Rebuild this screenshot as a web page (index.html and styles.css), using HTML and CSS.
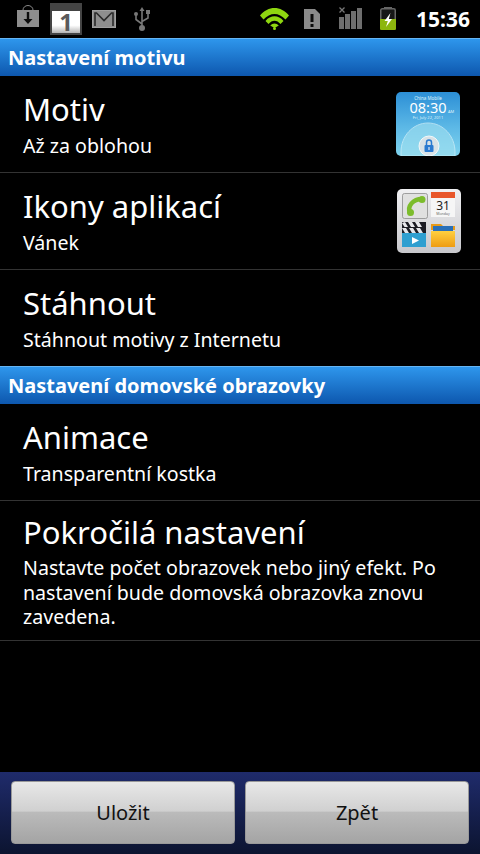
FILE: index.html
```html
<!DOCTYPE html>
<html lang="cs">
<head>
    <meta charset="UTF-8">
    <meta name="viewport" content="width=device-width, initial-scale=1.0">
    <title>Nastavení motivu</title>
    <link rel="stylesheet" href="styles.css">
</head>
<body>
    <div class="statusbar">
        <div class="status-left">
            <svg class="ic-market" width="22" height="22" viewBox="0 0 22 22">
                <path d="M6 6V5a5 4.500 0 0 1 10 0v1" fill="none" stroke="#8a8a8a" stroke-width="1"/>
                <rect x="0" y="5" width="22" height="17" fill="#8e8e8e"/>
                <path d="M9.800 7h2.400v7h3.300L11 19l-4.500-5h3.300z" fill="#0c0c0c"/>
            </svg>
            <div class="ic-cal"><span>1</span></div>
            <svg class="ic-mail" width="24" height="18" viewBox="0 0 24 18">
                <rect x="0.500" y="0.500" width="23" height="17" fill="#8e8e8e" stroke="#a0a0a0"/>
                <path d="M3 16V3h1.500L12 10.500 19.500 3H21v13" fill="none" stroke="#2a2a2a" stroke-width="1.600"/>
            </svg>
            <svg class="ic-usb" width="16" height="24" viewBox="0 0 16 24">
                <path d="M8 21V3M8 17L2 12.500V8M8 14.500l6-3.500V6" fill="none" stroke="#777" stroke-width="1.600"/>
                <path d="M8 0l2.500 4h-5z" fill="#777"/>
                <circle cx="8" cy="21" r="3" fill="#777"/>
                <circle cx="2" cy="7" r="2" fill="#777"/>
                <rect x="12" y="3" width="4" height="4" fill="#777"/>
            </svg>
        </div>
        <div class="status-right">
            <svg class="ic-wifi" width="29" height="22" viewBox="0 0 29 22">
                <path d="M0 7.500C8-2.500 21-2.500 29 7.500L25.500 11.500C19 4 10 4 3.500 11.500z" fill="#8ed610"/>
                <path d="M5.500 13C10.500 6.800 18.500 6.800 23.500 13L20.500 16C17 11.500 12 11.500 8.500 16z" fill="#8ed610"/>
                <path d="M10.200 17.500c2.500-2.800 6.100-2.800 8.600 0L14.500 20z" fill="#8ed610"/>
                <circle cx="14.500" cy="20.500" r="1.500" fill="#8ed610"/>
            </svg>
            <svg class="ic-sim" width="16" height="20" viewBox="0 0 16 20">
                <path d="M0 0h11l5 5v15H0z" fill="#8a8a8a"/>
                <path d="M6.500 5h3v8h-3zM6.500 15h3v3h-3z" fill="#0c0c0c"/>
            </svg>
            <svg class="ic-signal" width="23" height="22" viewBox="0 0 23 22">
                <path d="M0.500 0.500l5 5M5.500 0.500l-5 5" stroke="#777" stroke-width="1.300"/>
                <path d="M0 10h5v12H0zM6 7h5v15H6zM12 4h5v18h-5zM18 1h5v21h-5z" fill="#6e6e6e"/>
            </svg>
            <svg class="ic-batt" width="16" height="23" viewBox="0 0 16 23">
                <path d="M4 0h8v2H4z" fill="#666"/>
                <rect x="0.750" y="1.750" width="14.500" height="20.500" rx="1.500" fill="#161616" stroke="#666" stroke-width="1.500"/>
                <path d="M0 12h16v9.500a1.500 1.500 0 0 1-1.500 1.500h-13A1.500 1.500 0 0 1 0 21.500z" fill="#8cb60e"/>
                <path d="M10.500 6L4.500 14h3.300L6 20l6-8H8.800z" fill="#fff"/>
            </svg>
            <span class="clock">15:36</span>
        </div>
    </div>

    <div class="section">Nastavení motivu</div>
    <div class="row">
        <div class="row-text">
            <div class="row-title">Motiv</div>
            <div class="row-sub">Až za oblohou</div>
        </div>
        <svg class="row-icon theme-icon" width="64" height="64" viewBox="0 0 64 64">
            <defs>
                <linearGradient id="sky" x1="0" y1="0" x2="0" y2="1">
                    <stop offset="0" stop-color="#2c8fd6"/>
                    <stop offset="0.550" stop-color="#5cb8e6"/>
                    <stop offset="1" stop-color="#7fd4ee"/>
                </linearGradient>
            </defs>
            <rect width="64" height="64" rx="5" fill="url(#sky)"/>
            <path d="M5 64V60C5 44 17 31 32 31s27 13 27 29v4z" fill="#9fdff0" opacity="0.650" stroke="#e0f6fb"/>
            <text x="32" y="8" class="ic-t1" text-anchor="middle">China Mobile</text>
            <text x="32" y="21" class="ic-t2" text-anchor="middle">08:30</text>
            <text x="52" y="21" class="ic-t3">AM</text>
            <text x="32" y="27" class="ic-t3" text-anchor="middle">Fri, July 22, 2011</text>
            <circle cx="33" cy="54" r="10" fill="#d9e2e6" stroke="#f2f8fa"/>
            <path d="M30.500 53v-2.500a2.500 2.500 0 0 1 5 0V53" fill="none" stroke="#2a7ad0" stroke-width="1.500"/>
            <rect x="28.500" y="53" width="9" height="7" rx="1" fill="#2a7ad0"/>
            <rect x="32.500" y="55" width="1" height="3" fill="#fff"/>
        </svg>
    </div>
    <div class="row">
        <div class="row-text">
            <div class="row-title">Ikony aplikací</div>
            <div class="row-sub">Vánek</div>
        </div>
        <svg class="row-icon" width="64" height="64" viewBox="0 0 64 64">
            <defs>
                <linearGradient id="tile" x1="0" y1="0" x2="0" y2="1">
                    <stop offset="0" stop-color="#f0f0f2"/>
                    <stop offset="1" stop-color="#c8c8cc"/>
                </linearGradient>
                <linearGradient id="folder" x1="0" y1="0" x2="0" y2="1">
                    <stop offset="0" stop-color="#ffd040"/>
                    <stop offset="1" stop-color="#ee9c12"/>
                </linearGradient>
            </defs>
            <rect width="64" height="64" rx="5" fill="url(#tile)"/>
            <rect x="5.500" y="4.500" width="25" height="25" rx="2" fill="#e0e0e0" stroke="#8c8c8c" stroke-width="0.800"/>
            <path d="M13 24C10 17 16 10 25 10" fill="none" stroke="#7cbc2c" stroke-width="4.500" stroke-linecap="round"/>
            <circle cx="13.500" cy="23.500" r="3.500" fill="#7cbc2c"/>
            <circle cx="25" cy="10.500" r="3.500" fill="#7cbc2c"/>
            <rect x="34" y="3" width="24" height="25" fill="#f6f6f6"/>
            <rect x="34" y="3" width="24" height="6" fill="#e8562a"/>
            <text x="46" y="21" class="ic-cal-n" text-anchor="middle">31</text>
            <text x="46" y="26" class="ic-cal-s" text-anchor="middle">Monday</text>
            <rect x="5" y="44" width="24" height="14" fill="#2f9fd0"/>
            <rect x="5" y="33" width="24" height="11" fill="#1c1c24"/>
            <path d="M8 33l3 5H7.500L5 34zM15 33l3 5h-4l-3-5zM22 33l3 5h-4l-3-5zM9 39l3 5H8l-3-5zM16 39l3 5h-4l-3-5zM23 39l3 5h-4l-3-5z" fill="#e8e8ec"/>
            <path d="M15 48l7 3.500-7 3.500z" fill="#fff"/>
            <path d="M34 35h10l2 2h12v4H34z" fill="#e89a18"/>
            <path d="M36 37h20v5H36z" fill="#2a70b8"/>
            <path d="M34 42h24v16H34z" fill="url(#folder)"/>
        </svg>
    </div>
    <div class="row last">
        <div class="row-text">
            <div class="row-title">Stáhnout</div>
            <div class="row-sub">Stáhnout motivy z Internetu</div>
        </div>
    </div>

    <div class="section">Nastavení domovské obrazovky</div>
    <div class="row">
        <div class="row-text">
            <div class="row-title">Animace</div>
            <div class="row-sub">Transparentní kostka</div>
        </div>
    </div>
    <div class="row tall">
        <div class="row-text">
            <div class="row-title">Pokročilá nastavení</div>
            <div class="row-sub">Nastavte počet obrazovek nebo jiný efekt. Po nastavení bude domovská obrazovka znovu zavedena.</div>
        </div>
    </div>

    <div class="footer">
        <button class="btn">Uložit</button>
        <button class="btn">Zpět</button>
    </div>
</body>
</html>
```

FILE: styles.css
```css
html, body {
    margin: 0;
    height: 100%;
}
body {
    width: 480px;
    height: 854px;
    display: flex;
    flex-direction: column;
    background-color: #000;
    color: #fff;
    font-family: "Noto Sans", "Open Sans", sans-serif;
    overflow: hidden;
}
.statusbar {
    height: 38px;
    flex: none;
    display: flex;
    justify-content: space-between;
    align-items: flex-start;
}
.status-left, .status-right {
    display: flex;
    align-items: flex-start;
}
.status-left {
    padding-left: 17px;
}
.ic-market {
    margin-top: 5px;
}
.ic-cal {
    width: 32px;
    height: 32px;
    margin: 3px 0 0 11px;
    box-sizing: border-box;
    border: 2px solid #444;
    border-top-width: 8px;
    background: linear-gradient(#fff 65%, #b4b4b4);
    display: flex;
    align-items: center;
    justify-content: center;
}
.ic-cal span {
    color: #5a5a5a;
    font-size: 24px;
    font-weight: 700;
    line-height: 22px;
}
.ic-mail {
    margin: 10px 0 0 10px;
}
.ic-usb {
    margin: 7px 0 0 18px;
}
.status-right {
    padding-right: 10px;
}
.ic-wifi {
    margin-top: 8px;
}
.ic-sim {
    margin: 9px 0 0 15px;
}
.ic-signal {
    margin: 7px 0 0 19px;
}
.ic-batt {
    margin: 7px 0 0 18px;
}
.clock {
    margin-left: 20px;
    font-size: 21px;
    font-weight: 700;
    line-height: 38px;
}
.section {
    height: 38px;
    flex: none;
    box-sizing: border-box;
    padding-left: 8px;
    border-top: 1px solid #66b5f4;
    background: linear-gradient(#2e96ec, #0d57ae);
    font-size: 20px;
    font-weight: 700;
    line-height: 37px;
}
.row {
    height: 97px;
    flex: none;
    box-sizing: border-box;
    padding: 0 19px 0 23px;
    border-bottom: 1px solid #333;
    display: flex;
    align-items: center;
    justify-content: space-between;
}
.row.last {
    height: 96px;
    border-bottom: none;
}
.row.tall {
    height: 140px;
    align-items: flex-start;
}
.theme-icon {
    margin-right: 1px;
}
.row-title {
    margin: -1px 0 1px;
    font-size: 31px;
    line-height: 44px;
}
.row-sub {
    font-size: 19.600px;
    line-height: 28px;
}
.row.tall .row-text {
    padding-top: 10px;
}
.row.tall .row-sub {
    margin-top: 2px;
    line-height: 24.500px;
}
.row-icon {
    flex: none;
}
.ic-t1 { font-size: 4.500px; fill: #dff2fb; }
.ic-t2 { font-size: 14.500px; fill: #fff; }
.ic-t3 { font-size: 4px; fill: #dff2fb; }
.ic-cal-n { font-size: 12px; fill: #222; }
.ic-cal-s { font-size: 3.500px; fill: #666; }
.footer {
    margin-top: auto;
    height: 82px;
    flex: none;
    box-sizing: border-box;
    padding: 9px 11px 10px;
    display: grid;
    grid-template-columns: 1fr 1fr;
    gap: 10px;
    background: linear-gradient(#1f2b6b, #0c1430);
}
.btn {
    border: 1px solid #999;
    border-radius: 4px;
    background: linear-gradient(#e8e8e8 0, #d0d0d0 48%, #bbb 49%, #a4a4a4 100%);
    color: #111;
    font-family: inherit;
    font-size: 20px;
    padding: 0;
}
```
